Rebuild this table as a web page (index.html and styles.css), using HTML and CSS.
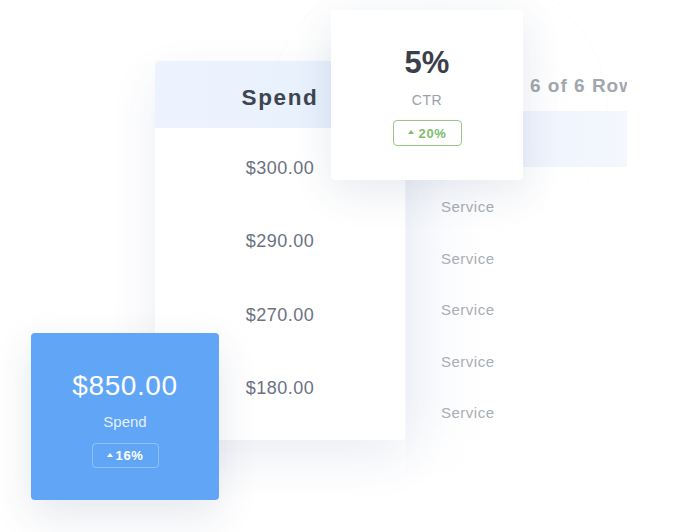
FILE: index.html
```html
<!DOCTYPE html>
<html lang="en">
<head>
<meta charset="utf-8">
<title>Spend overview</title>
<link rel="stylesheet" href="styles.css">
</head>
<body>
<div class="stage">
  <div class="ring"></div>

  <div class="back-panel">
    <div class="back-title">6 of 6 Rows</div>
    <div class="back-bar"></div>
    <div class="back-rows">
      <div class="back-row">Service</div>
      <div class="back-row">Service</div>
      <div class="back-row">Service</div>
      <div class="back-row">Service</div>
      <div class="back-row">Service</div>
    </div>
  </div>

  <div class="spend-table">
    <div class="spend-head">Spend</div>
    <div class="spend-body">
      <div class="spend-cell">$300.00</div>
      <div class="spend-cell">$290.00</div>
      <div class="spend-cell">$270.00</div>
      <div class="spend-cell">$180.00</div>
    </div>
  </div>

  <div class="stat-card ctr-card">
    <div class="stat-value">5%</div>
    <div class="stat-label">CTR</div>
    <div class="badge badge-green"><span class="caret"></span>20%</div>
  </div>

  <div class="stat-card blue-card">
    <div class="stat-value">$850.00</div>
    <div class="stat-label">Spend</div>
    <div class="badge badge-white"><span class="caret"></span>16%</div>
  </div>
</div>
</body>
</html>
```

FILE: styles.css
```css
* { box-sizing: border-box; }

html, body {
  margin: 0;
  padding: 0;
  background: #ffffff;
}

body {
  width: 674px;
  height: 532px;
  overflow: hidden;
  font-family: "Liberation Sans", Arial, Helvetica, sans-serif;
}

.stage {
  position: relative;
  width: 674px;
  height: 532px;
}

.ring {
  position: absolute;
  left: 268px;
  top: -40px;
  width: 340px;
  height: 300px;
  border-radius: 50%;
  border: 1px solid rgba(90, 110, 150, 0.025);
  background: radial-gradient(circle at 50% 50%, rgba(244, 246, 251, 0.35), rgba(255,255,255,0) 70%);
}

/* back panel */
.back-panel {
  position: absolute;
  left: 406px;
  top: 60px;
  width: 221px;
  height: 472px;
  overflow: hidden;
  background:
    linear-gradient(180deg, rgba(255,255,255,0) 70%, #ffffff 90%),
    linear-gradient(90deg, rgba(246, 248, 252, 0.95), rgba(255,255,255,0.6) 35%, rgba(255,255,255,0));
}

.back-title {
  padding-left: 124px;
  height: 51px;
  padding-top: 15px;
  font-size: 19px;
  font-weight: 700;
  letter-spacing: 1px;
  color: #a2a6ad;
  white-space: nowrap;
}

.back-bar {
  height: 56px;
  background: linear-gradient(90deg, #e9eefa, #f1f5fd 70%, #f4f7fd);
}

.back-rows {
  display: flex;
  flex-direction: column;
  padding-top: 31px;
  padding-left: 35px;
}

.back-row {
  height: 51.5px;
  font-size: 15px;
  letter-spacing: 0.5px;
  color: #a9adb4;
}

/* spend table */
.spend-table {
  position: absolute;
  left: 155px;
  top: 61px;
  width: 250px;
  height: 379px;
  background: #ffffff;
  border-radius: 4px;
  box-shadow: 0 18px 48px rgba(40, 70, 130, 0.09);
  overflow: hidden;
}

.spend-head {
  height: 67px;
  display: flex;
  align-items: center;
  justify-content: center;
  background: linear-gradient(90deg, #ecf3fe, #e9f1fd 60%, #e4ecf9);
  font-size: 22.5px;
  font-weight: 700;
  letter-spacing: 1.6px;
  color: #3e4450;
  padding-top: 6px;
}

.spend-body {
  display: flex;
  flex-direction: column;
  padding-top: 30px;
}

.spend-cell {
  height: 73.3px;
  text-align: center;
  font-size: 18px;
  letter-spacing: 0.5px;
  color: #6b7282;
}

/* stat cards */
.stat-card {
  position: absolute;
  display: flex;
  flex-direction: column;
  align-items: center;
  border-radius: 4px;
}

.ctr-card {
  left: 331px;
  top: 10px;
  width: 192px;
  height: 170px;
  background: #ffffff;
  box-shadow: 0 12px 40px rgba(40, 60, 110, 0.11);
  padding-top: 37px;
}

.ctr-card .stat-value {
  font-size: 31px;
  font-weight: 700;
  color: #3a3f4a;
  line-height: 32px;
}

.ctr-card .stat-label {
  margin-top: 13px;
  font-size: 14px;
  letter-spacing: 0.6px;
  color: #9aa1ad;
  line-height: 16px;
}

.blue-card {
  left: 31px;
  top: 333px;
  width: 188px;
  height: 167px;
  background: #61a6f6;
  box-shadow: 0 14px 40px rgba(40, 60, 110, 0.12);
  padding-top: 38px;
}

.blue-card .stat-value {
  font-size: 28px;
  letter-spacing: 0.6px;
  color: #ffffff;
  line-height: 30px;
}

.blue-card .stat-label {
  margin-top: 12px;
  font-size: 15px;
  color: rgba(255, 255, 255, 0.85);
  line-height: 17px;
}

.badge {
  display: flex;
  align-items: center;
  justify-content: center;
  gap: 5px;
  font-size: 13px;
  font-weight: 700;
  letter-spacing: 0.6px;
  border-radius: 4px;
}

.badge-green {
  margin-top: 12px;
  width: 69px;
  height: 26px;
  border: 1.5px solid #97c887;
  color: #80bd6d;
}

.badge-white {
  margin-top: 13px;
  width: 67px;
  height: 25px;
  border: 1px solid rgba(255, 255, 255, 0.3);
  color: #ffffff;
  gap: 3px;
}

.caret {
  width: 0;
  height: 0;
  border-left: 3px solid transparent;
  border-right: 3px solid transparent;
  border-bottom: 4px solid currentColor;
  margin-bottom: 2px;
}
```
